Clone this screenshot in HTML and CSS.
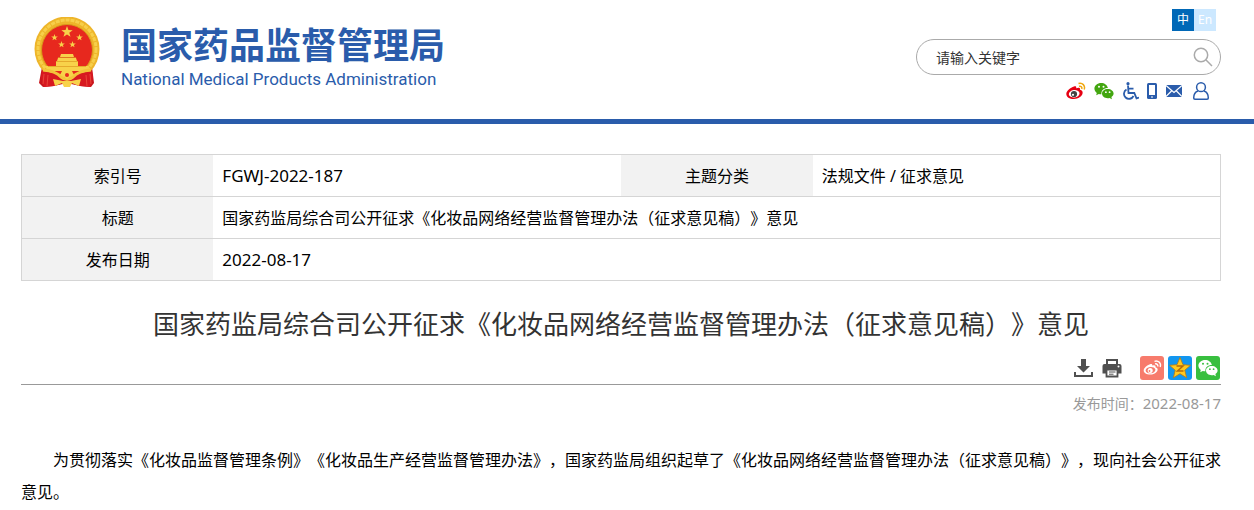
FILE: index.html
```html
<!DOCTYPE html>
<html lang="zh-CN">
<head>
    <meta charset="UTF-8">
    <meta name="viewport" content="width=device-width, initial-scale=1.0">
    <title>国家药品监督管理局</title>
    <link rel="stylesheet" href="styles.css">
</head>
<body>
    <!-- 公用图形 -->
    <svg class="sprite" aria-hidden="true">
        <symbol id="star" viewBox="-10 -10 20 20">
            <path d="M0-10 2.4-3.2 9.5-3.1 3.8 1.2 5.9 8.1 0 4-5.9 8.1-3.8 1.2-9.5-3.1-2.4-3.2Z"/>
        </symbol>
        <symbol id="wechat" viewBox="0 0 20 18">
            <path d="M7.2 1C3.3 1 .4 3.5.4 6.6c0 1.8 1 3.3 2.4 4.3L2.2 13.3 4.8 12c.8.2 1.6.3 2.6.3C7 8.4 9.8 6 13.9 6 13.3 3 10.5 1 7.2 1Z"/>
            <path d="M13.7 6.9c-3.3 0-5.7 2.1-5.7 4.7s2.4 4.7 5.7 4.7c.7 0 1.3-.1 1.9-.3L17.9 17.2 17.4 15.1c1.3-.9 2.2-2.1 2.2-3.5 0-2.6-2.6-4.7-5.9-4.7Z"/>
            <g class="eye">
                <circle cx="5" cy="4.7" r="1"/>
                <circle cx="9.5" cy="4.7" r="1"/>
                <circle cx="11.9" cy="10.2" r=".9"/>
                <circle cx="15.6" cy="10.2" r=".9"/>
            </g>
        </symbol>
    </svg>

    <header class="header">
        <div class="wrap header-inner">
            <a class="logo" href="#">
                <svg class="emblem" viewBox="0 0 66 71" aria-hidden="true">
                    <path fill="#c8161d" d="M8 50 5 66 9 70 20 69 33 66 46 69 57 70 60 66 58 50Z"/>
                    <circle cx="33" cy="32" r="32.5" fill="#eeb52a"/>
                    <circle cx="33" cy="32" r="29" fill="none" stroke="#f7cf4a" stroke-width="3" stroke-dasharray="4 1"/>
                    <circle cx="33" cy="33" r="25.5" fill="#e7281e" stroke="#d99a1b"/>
                    <g fill="#f8d24a">
                        <use href="#star" x="27" y="9" width="12" height="12"/>
                        <use href="#star" x="17" y="17" width="7" height="7"/>
                        <use href="#star" x="42" y="17" width="7" height="7"/>
                        <use href="#star" x="24" y="24" width="7" height="7"/>
                        <use href="#star" x="35" y="24" width="7" height="7"/>
                        <path d="M27 37H39L40 40H26ZM24 41H42L43 44H23ZM22 44H44V49H22ZM11 49H55L52 54H14Z"/>
                    </g>
                    <path fill="none" stroke="#dd9a20" stroke-width=".7" d="M24 40.5H42M22 44.5H44M14 49.5H52"/>
                    <path fill="#d71920" d="M8 54Q20 55 28 60 33 58 38 60 46 55 58 54L59 60 56 70 46 69 33 65 20 69 10 70 7 60Z"/>
                    <path fill="none" stroke="#f3c43a" stroke-width="3" d="M9 53Q22 54 27 60 33 65 39 60 44 54 57 53"/>
                    <path fill="#f8d24a" d="M26 58 28 54 33 52 38 54 40 58 33 62ZM19 62 29 64H37L47 62 45 69 38 66 36 70H30L28 66 21 69Z"/>
                    <circle cx="33" cy="58" r="2" fill="#e7281e"/>
                    <path fill="none" stroke="#e9453a" d="M10 57 9 67M14 58 13 69M52 58 53 69M56 57 57 67"/>
                </svg>
                <span class="logo-text">
                    <span class="logo-cn">国家药品监督管理局</span>
                    <span class="logo-en">National Medical Products Administration</span>
                </span>
            </a>

            <div class="tools">
                <div class="lang">
                    <a class="active" href="#">中</a>
                    <a href="#">En</a>
                </div>
                <form class="search">
                    <input type="text" placeholder="请输入关键字" aria-label="请输入关键字">
                    <button type="button" aria-label="搜索">
                        <svg width="20" height="20" viewBox="0 0 20 20" fill="none" stroke="#aaa" stroke-width="1.5">
                            <circle cx="8" cy="8" r="6.7"/>
                            <path d="M12.8 12.8 19 19"/>
                        </svg>
                    </button>
                </form>
                <nav class="quick">
                    <a href="#" aria-label="微博">
                        <svg width="20" height="18" viewBox="0 0 20 18">
                            <path fill="#e60012" d="M8 4.5C9.5 3.8 10.6 4.3 10.2 6.2 12.6 5.2 14.6 5.5 14 7.8 15.9 8.4 17 9.5 16.6 11.3 16 14.6 12.2 17 7.8 17 3.5 17 .3 15 .3 12 .3 9 4.5 5.5 8 4.5Z"/>
                            <ellipse cx="8.2" cy="11.8" rx="5.4" ry="3.7" fill="#fff" transform="rotate(-7 8 12)"/>
                            <circle cx="8" cy="12" r="3.1" fill="#444"/>
                            <circle cx="7" cy="12.8" r="1.1" fill="#fff"/>
                            <path d="M12.5 1.5C16.5.3 19.5 3.7 18.2 7.5M13 4.3C15 3.8 16.3 5.2 15.7 6.9" fill="none" stroke="#f0a810" stroke-width="1.5"/>
                        </svg>
                    </a>
                    <a class="green" href="#" aria-label="微信">
                        <svg width="20" height="18"><use href="#wechat"/></svg>
                    </a>
                    <a href="#" aria-label="无障碍">
                        <svg width="17" height="18" viewBox="0 0 17 18" fill="none" stroke="#2a5cab" stroke-width="1.8">
                            <circle cx="6" cy="1.7" r="1.6" fill="#2a5cab" stroke="none"/>
                            <path d="M6 3.5 6.5 11H12.3L14.5 16.3 17 15.5M6.3 6.7H11.5M4.5 7.5A5 5 0 1 0 11.5 14"/>
                        </svg>
                    </a>
                    <a href="#" aria-label="手机版">
                        <svg width="10" height="18" viewBox="0 0 10 18">
                            <rect y="1" width="10" height="16" rx="1.5" fill="#2a5cab"/>
                            <path fill="#fff" d="M2 3H8V13H2ZM4 14.5H6V15.5H4Z"/>
                        </svg>
                    </a>
                    <a href="#" aria-label="邮箱">
                        <svg width="17" height="18" viewBox="0 0 17 18">
                            <path fill="#2a5cab" d="M1 3H17V15H1Z"/>
                            <path fill="none" stroke="#fff" stroke-width="1.2" d="M1 3.5 9 10.5 17 3.5M1 14.5 6.5 9M17 14.5 11.5 9"/>
                        </svg>
                    </a>
                    <a href="#" aria-label="个人中心">
                        <svg width="22" height="18" viewBox="0 0 22 18" fill="none" stroke="#2a5cab" stroke-width="1.5">
                            <circle cx="11" cy="5.2" r="4.4"/>
                            <path d="M8 9C5 10 3.7 12.5 3.7 16 3.7 16.8 4.2 17.2 5 17.2H17C17.8 17.2 18.3 16.8 18.3 16 18.3 12.5 17 10 14 9"/>
                        </svg>
                    </a>
                </nav>
            </div>
        </div>
    </header>

    <main class="wrap">
        <table class="info">
            <colgroup>
                <col class="col-label"><col class="col-value">
                <col class="col-label"><col class="col-value">
            </colgroup>
            <tr>
                <th scope="row">索引号</th>
                <td class="num">FGWJ-2022-187</td>
                <th scope="row">主题分类</th>
                <td>法规文件 / 征求意见</td>
            </tr>
            <tr>
                <th scope="row">标题</th>
                <td colspan="3">国家药监局综合司公开征求《化妆品网络经营监督管理办法（征求意见稿）》意见</td>
            </tr>
            <tr>
                <th scope="row">发布日期</th>
                <td class="num" colspan="3">2022-08-17</td>
            </tr>
        </table>

        <h1>国家药监局综合司公开征求《化妆品网络经营监督管理办法（征求意见稿）》意见</h1>

        <div class="share">
            <button type="button" aria-label="下载">
                <svg width="20" height="20" viewBox="0 0 20 20" fill="#505050">
                    <path d="M7 1H12V8H16L9.5 14.5 3 8H7ZM0 14H2V17H17V14H19V19H0Z"/>
                </svg>
            </button>
            <button type="button" aria-label="打印">
                <svg width="20" height="20" viewBox="0 0 20 20">
                    <path fill="none" stroke="#505050" stroke-width="2" d="M5 6V2H15V6"/>
                    <path fill="#505050" d="M2.5 6H17.5Q19.5 6 19.5 8V15.5H16V11H4V15.5H.5V8Q.5 6 2.5 6Z"/>
                    <path fill="#fff" stroke="#505050" stroke-width="1.8" d="M4.5 11.5H15.5V18.5H4.5Z"/>
                    <path stroke="#505050" d="M7 14H13.5M7 16.2H11.5"/>
                    <circle cx="16.5" cy="8.5" r="1" fill="#fff"/>
                </svg>
            </button>
            <div class="share-list">
                <a class="weibo" href="#" aria-label="分享到微博">
                    <svg width="24" height="24" viewBox="0 0 24 24">
                        <path fill="#fff" d="M10 8.2C11.6 7.5 12.6 8 12.2 9.6 14.5 8.7 16 9.3 15.5 11.2 17 11.7 17.9 12.6 17.6 14 17.1 16.7 14 18.5 10.2 18.5 6.5 18.5 3.7 17 3.7 14.5 3.7 12 7 9 10 8.2Z"/>
                        <ellipse cx="10.5" cy="14.2" rx="4.9" ry="3.2" fill="#f77b6c" transform="rotate(-7 10 14)"/>
                        <circle cx="10.2" cy="14.4" r="2.5" fill="#fff"/>
                        <circle cx="9.5" cy="15" r=".9" fill="#f77b6c"/>
                        <path fill="none" stroke="#fff" stroke-width="1.4" d="M14.5 5.3C18.5 4.2 21.5 7.3 20.2 11M15 7.9C17 7.5 18.3 8.8 17.7 10.4"/>
                    </svg>
                </a>
                <a class="qzone" href="#" aria-label="分享到QQ空间">
                    <svg width="24" height="24" viewBox="0 0 24 24">
                        <path fill="#ffc91f" stroke="#b87b10" stroke-width=".8" d="M12 1.5 15 8.7 22.5 9.3 16.8 14.2 18.6 21.7 12 17.7 5.4 21.7 7.2 14.2 1.5 9.3 9 8.7Z"/>
                        <path fill="none" stroke="#b36a08" stroke-width="1.5" d="M8.5 10H15L9.5 15H15.5"/>
                    </svg>
                </a>
                <a class="weixin" href="#" aria-label="分享到微信">
                    <svg width="20" height="18"><use href="#wechat"/></svg>
                </a>
            </div>
        </div>

        <p class="time">发布时间：<span>2022-08-17</span></p>

        <article>
            <p>为贯彻落实《化妆品监督管理条例》《化妆品生产经营监督管理办法》，国家药监局组织起草了《化妆品网络经营监督管理办法（征求意见稿）》，现向社会公开征求意见。</p>
        </article>
    </main>
</body>
</html>
```
FILE: styles.css
```css
* {
    box-sizing: border-box;
}
body {
    margin: 0;
    background: #fff;
    color: #000;
    font-family: "Noto Sans", "Noto Sans CJK SC", sans-serif;
    font-size: 16px;
    text-spacing-trim: space-all;
}
a {
    text-decoration: none;
}
svg {
    display: block;
}
button {
    padding: 0;
    border: none;
    background: none;
    cursor: pointer;
}
.sprite {
    position: absolute;
    width: 0;
    height: 0;
}
.wrap {
    max-width: 1254px;
    margin: 0 auto;
    padding: 0 33px 0 21px;
}

/* 页头 */
.header {
    border-bottom: 5px solid #2a5cab;
}
.header-inner {
    display: flex;
    justify-content: space-between;
    align-items: flex-start;
    padding-top: 9px;
    padding-bottom: 19px;
}
.logo {
    display: flex;
    gap: 21px;
    padding: 8px 0 0 13px;
    color: #2a5cab;
}
.emblem {
    width: 66px;
    height: 71px;
}
.logo-text {
    display: flex;
    flex-direction: column;
    gap: 4px;
    padding-top: 6px;
    white-space: nowrap;
}
.logo-cn {
    font-family: "Noto Sans CJK SC", sans-serif;
    font-size: 36px;
    font-weight: bold;
    line-height: 40px;
}
.logo-en {
    font-family: Roboto, "Liberation Sans", sans-serif;
    font-size: 17px;
    line-height: 24px;
}
.tools {
    display: flex;
    flex-direction: column;
    align-items: flex-end;
    width: 305px;
}
.lang {
    display: flex;
    margin-right: 5px;
}
.lang a {
    width: 22px;
    height: 22px;
    background: #cce8ff;
    color: #fff;
    font-size: 12px;
    line-height: 22px;
    text-align: center;
}
.lang a.active {
    background: #0068b7;
}
.search {
    display: flex;
    align-items: center;
    width: 100%;
    height: 36px;
    margin-top: 8px;
    padding: 0 7px 0 19px;
    border: 1px solid #aaa;
    border-radius: 18px;
}
.search input {
    flex: 1;
    min-width: 0;
    padding: 0;
    border: none;
    outline: none;
    background: none;
    font-family: inherit;
    font-size: 14px;
}
.search input::placeholder {
    color: #333;
}
.quick {
    display: flex;
    gap: 8px;
    margin-top: 7px;
    padding-right: 9px;
}
.green {
    fill: #43a610;
}
.eye {
    fill: var(--eye, #fff);
}

/* 信息表 */
.info {
    width: 100%;
    margin-top: 30px;
    border-collapse: collapse;
    table-layout: fixed;
    border: 1px solid #d5d5d5;
}
.col-label {
    width: 16%;
}
.col-value {
    width: 34%;
}
.info tr {
    height: 42px;
    border-bottom: 1px solid #d5d5d5;
}
.info th {
    padding: 0;
    background: #f2f2f2;
    font-weight: normal;
    line-height: 24px;
}
.info td {
    padding: 0 9px;
    line-height: 24px;
}
.info .num {
    font-size: 17px;
}

/* 正文 */
h1 {
    margin: 24px 0 12px;
    color: #333;
    font-size: 26px;
    font-weight: normal;
    line-height: 39px;
    text-align: center;
}
.share {
    display: flex;
    justify-content: flex-end;
    align-items: center;
    gap: 8px;
    padding: 0 1px 4px 0;
    border-bottom: 1px solid #999;
}
.share-list {
    display: flex;
    gap: 4px;
    margin-left: 10px;
}
.share-list a {
    display: flex;
    align-items: center;
    justify-content: center;
    width: 24px;
    height: 24px;
    border-radius: 3px;
}
.weibo {
    background: #f77b6c;
}
.qzone {
    background: #1296ef;
}
.weixin {
    --eye: #38bf3f;
    background: #38bf3f;
    fill: #fff;
}
.time {
    margin: 6px 0 0;
    color: #999;
    font-size: 14px;
    line-height: 24px;
    text-align: right;
}
.time span {
    font-size: 15px;
}
article {
    margin-top: 28px;
}
article p {
    margin: 0;
    line-height: 32px;
    text-indent: 2em;
}
```
